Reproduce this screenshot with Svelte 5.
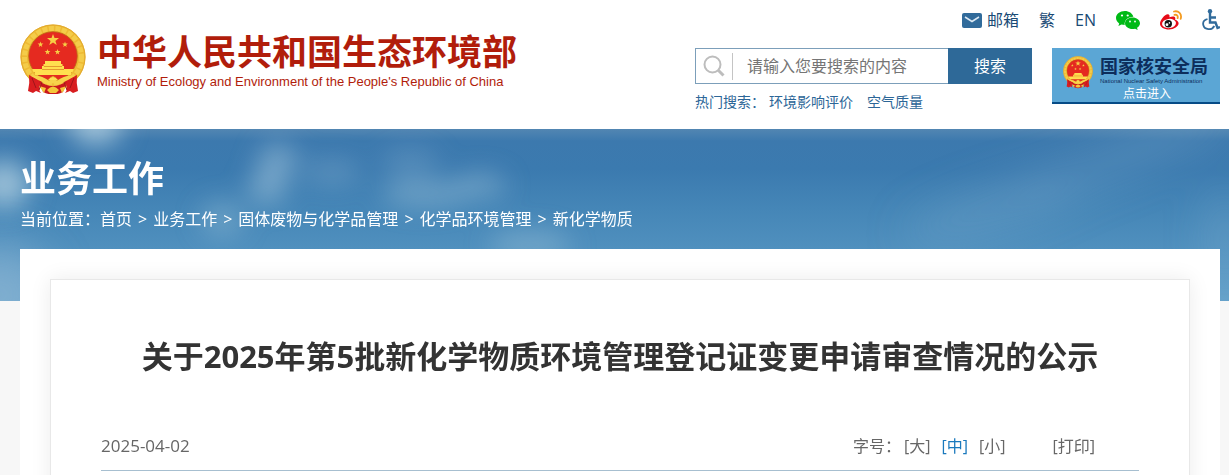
<script>
  // Article page: site header, sky banner with breadcrumb, notice card with font size switch.
  let keyword = ''
  let size = '中'

  const hotWords = ['环境影响评价', '空气质量']
  const crumbs = ['首页', '业务工作', '固体废物与化学品管理', '化学品环境管理', '新化学物质']
  const sizes = ['大', '中', '小']
  // four small stars around the big one: x, y
  const stars = [[20.5, 20.5], [27.5, 28], [37.5, 28], [45, 20.5]]
  const star = 'M0-6 1.5-2 6-1.9 2.4.9 3.7 5 0 2.6-3.7 5-2.4.9-6-1.9-1.5-2Z'
</script>

{#snippet emblem()}
  <svg class="emblem" viewBox="0 0 66 70" aria-hidden="true">
    <circle cx="33" cy="33" r="32.5" fill="#eeb934" />
    <circle cx="33" cy="33" r="28.5" fill="none" stroke="#f4cc49" stroke-width="5" stroke-dasharray="5 1.5" />
    <circle cx="33" cy="33" r="32" fill="none" stroke="#e2aa30" stroke-width="1" />
    <circle cx="33" cy="32" r="24.3" fill="#e52a20" stroke="#bd6517" stroke-width="0.8" />
    <path d={star} fill="#f7cf45" transform="translate(33 16)" />
    {#each stars as [x, y]}
      <path d={star} fill="#f7cf45" transform="translate({x} {y}) scale(.48)" />
    {/each}
    <path d="M25 37h16v3h1.500v2H23.500v-2H25ZM22 42h22v4H22ZM12 45h42l-1.500 3H13.500ZM15 48h36v3H15Z" fill="#ffdf4f" />
    <path d="M24 42.500h18M22 45.500h22" stroke="#d87d20" stroke-width="0.7" />
    <path d="M9 51 22 57Q17 65 21 69L16 67 13 69 8 67Q10 59 9 51ZM57 51 44 57Q49 65 45 69L50 67 53 69 58 67Q56 59 57 51Z" fill="#d81d20" />
    <path d="M19 57Q33 67 47 57L43 68Q33 73 23 68Z" fill="#c9181d" />
    <path d="M11 52Q22 51 29 57L33 52 37 57Q44 51 55 52L48 56Q42 59 37 61L33 59 29 61Q23 58 18 56Z" fill="#f7d34b" />
    <path d="M19 62 26 64 24 69ZM47 62 40 64 42 69ZM27 66Q33 59 39 66L36 69H30Z" fill="#f4c73b" />
    <path d="m12 54 4 10M54 54l-4 10M22 58l-3 8M44 58l3 8" stroke="#9f151a" stroke-width="1" />
    <path d="M28 56Q33 49 38 56" fill="#ffdd55" stroke="#d79522" stroke-width="0.7" />
  </svg>
{/snippet}

<header class="wrap header">
  <a class="brand" href="#home">
    {@render emblem()}
    <span class="names">
      <strong>中华人民共和国生态环境部</strong>
      <span>Ministry of Ecology and Environment of the People's Republic of China</span>
    </span>
  </a>

  <div class="tools">
    <nav class="quick" aria-label="快捷入口">
      <a class="mail" href="#mail">
        <svg width="20" height="15" viewBox="0 0 20 15" aria-hidden="true">
          <rect width="20" height="15" rx="2" fill="#316b9b" />
          <path d="m3 4 7 4.500L17 4" fill="none" stroke="#dce9f4" stroke-width="1.500" />
        </svg>邮箱</a>
      <a href="#traditional">繁</a>
      <a href="#english">EN</a>
      <a href="#wechat" aria-label="微信">
        <svg width="24" height="20" viewBox="0 0 24 20" fill="#00ba16">
          <path d="M8.800 1C4 1 0 4.100 0 8c0 2.200 1.300 4.100 3.200 5.400L2.400 16l3.100-1.500c1 .3 2 .5 3.200.5C8 10.500 11.600 7 17.400 6.700 16.500 3.400 13 1 8.800 1Z" />
          <path d="M16.500 7.500c-4.200 0-7.500 2.600-7.500 5.800s3.300 5.800 7.500 5.800c.9 0 1.800-.1 2.600-.4l2.600 1.300-.7-2.200c1.800-1 3-2.700 3-4.500 0-3.200-3.400-5.800-7.500-5.800Z" />
          <g fill="#fff"><circle cx="6" cy="5.500" r="1.100" /><circle cx="11.700" cy="5.500" r="1.100" /><circle cx="14" cy="11.500" r="0.900" /><circle cx="19" cy="11.500" r="0.900" /></g>
        </svg>
      </a>
      <a href="#weibo" aria-label="微博">
        <svg width="22" height="20" viewBox="0 0 22 20">
          <path d="M8.600 4.500c1.200.5 1.100 1.900.8 2.800 2.500-1.100 5.100-1.200 5.700.1.400.8.200 1.700 0 2.300 2.200.7 3.500 1.800 3.500 3.600 0 3.200-4.600 6.200-9.500 6.200C4 19.500 0 17.100 0 13.700c0-3.700 5.600-10.500 8.600-9.200Z" fill="#e60b18" />
          <ellipse cx="9" cy="13.500" rx="7" ry="4.600" fill="#fff" transform="rotate(-7 9 13.500)" />
          <circle cx="8.300" cy="13.700" r="3.700" fill="#111" />
          <circle cx="7" cy="14.700" r="1.400" fill="#fff" /><circle cx="9.400" cy="12.900" r="0.800" fill="#fff" />
          <path d="M14 1.500c4.400-1.200 8.200 2.500 6.700 7.300M14.500 4.900c2.200-.6 3.800 1.100 3.100 3.200" fill="none" stroke="#f49b20" stroke-width="1.800" stroke-linecap="round" />
        </svg>
      </a>
      <a href="#accessible" aria-label="无障碍">
        <svg width="18" height="22" viewBox="0 0 18 22" fill="none" stroke="#316b9b" stroke-width="2">
          <circle cx="8" cy="2.300" r="2.200" fill="#316b9b" stroke="none" />
          <path d="M8 4v9.500h5.500l2 5.500 2.500-1M8 8.500h6" stroke-width="2.400" />
          <path d="M5.500 10C2 11 .7 13.500 1.300 16c1.200 5 8.700 5.700 11 1" stroke-width="1.800" />
        </svg>
      </a>
    </nav>

    <div class="lower">
      <div>
        <form class="search" on:submit|preventDefault>
          <label class="field">
            <svg width="22" height="22" viewBox="0 0 22 22" fill="none" stroke="#bdbdbd" aria-hidden="true">
              <circle cx="9.500" cy="9.500" r="8" stroke-width="2" />
              <path d="m15 15 5.500 5.500" stroke-width="3" />
            </svg>
            <input type="text" aria-label="搜索" placeholder="请输入您要搜索的内容" bind:value={keyword} />
          </label>
          <button>搜索</button>
        </form>
        <p class="hot">
          <span>热门搜索：</span>
          {#each hotWords as word}<a href="#hot">{word}</a>{/each}
        </p>
      </div>
      <a class="nnsa" href="#nnsa">
        {@render emblem()}
        <span class="nnsa-text">
          <strong>国家核安全局</strong>
          <small>National Nuclear Safety Administration</small>
        </span>
        <span class="enter">点击进入</span>
      </a>
    </div>
  </div>
</header>

<main>
  <!-- sky banner, runs behind the top of the white content block -->
  <svg class="sky" viewBox="0 0 1229 172" preserveAspectRatio="none" aria-hidden="true">
    <defs>
      <filter id="soft" x="-50%" y="-80%" width="200%" height="260%"><feGaussianBlur stdDeviation="13" /></filter>
      <filter id="wide" x="-50%" y="-100%" width="200%" height="300%"><feGaussianBlur stdDeviation="22" /></filter>
    </defs>
    <g fill="#a9cadd" filter="url(#soft)">
      <ellipse cx="96" cy="-6" rx="26" ry="22" opacity="0.9" />
      <ellipse cx="4" cy="55" rx="26" ry="24" opacity="0.85" />
      <ellipse cx="278" cy="32" rx="19" ry="18" opacity="0.5" />
      <ellipse cx="267" cy="58" rx="18" ry="18" opacity="0.5" />
      <ellipse cx="332" cy="43" rx="30" ry="12" opacity="0.3" />
      <ellipse cx="410" cy="34" rx="30" ry="16" opacity="0.22" />
      <ellipse cx="425" cy="65" rx="44" ry="13" opacity="0.42" />
      <ellipse cx="480" cy="56" rx="26" ry="12" opacity="0.42" />
      <ellipse cx="222" cy="90" rx="22" ry="18" opacity="0.35" />
      <ellipse cx="530" cy="116" rx="42" ry="14" opacity="0.4" />
    </g>
    <g fill="#8ab4d2" filter="url(#wide)">
      <ellipse cx="0" cy="165" rx="50" ry="50" opacity="0.7" />
      <ellipse cx="1130" cy="26" rx="120" ry="14" opacity="0.35" transform="rotate(-22 1130 26)" />
      <ellipse cx="990" cy="80" rx="90" ry="18" opacity="0.3" transform="rotate(-18 990 80)" />
      <ellipse cx="1225" cy="110" rx="14" ry="50" opacity="0.4" />
    </g>
  </svg>
  <div class="wrap front">
    <div class="channel">
      <h2>业务工作</h2>
      <nav class="crumbs" aria-label="当前位置">
        <span>当前位置：</span>
        {#each crumbs as crumb, i}
          {#if i > 0}<span>&gt;</span>{/if}
          <a href="#channel">{crumb}</a>
        {/each}
      </nav>
    </div>
    <div class="content">
      <article>
        <h1>关于2025年第5批新化学物质环境管理登记证变更申请审查情况的公示</h1>
        <div class="meta">
          <time datetime="2025-04-02">2025-04-02</time>
          <div class="actions">
            <span>字号：</span>
            {#each sizes as s}
              <button class:active={size === s} on:click={() => (size = s)}>[{s}]</button>
            {/each}
            <button class="print" on:click={() => window.print()}>[打印]</button>
          </div>
        </div>
      </article>
    </div>
  </div>
</main>

<style>
  :global(body) { margin: 0; background: #f7f7f7; font: 16px/24px "Open Sans", "Noto Sans CJK SC", sans-serif; color: #666; overflow-x: hidden; }
  a { color: inherit; text-decoration: none; }
  button { border: 0; padding: 0; background: none; font: inherit; color: inherit; cursor: pointer; }
  h1, h2, p { margin: 0; }
  svg { display: block; flex: none; }
  .wrap { padding: 0 9px 0 20px; }

  .header { display: flex; justify-content: space-between; height: 129px; background: #fff; }
  .brand { display: flex; align-items: flex-start; gap: 10px; padding-top: 24px; color: #b11d0b; }
  .emblem { width: 66px; height: 70px; }
  .names { display: flex; flex-direction: column; padding: 2px 0 0 1px; white-space: nowrap; }
  .names strong { font: 700 35px/48px "Noto Sans CJK SC", sans-serif; }
  .names span { font: 13px/16px "Liberation Sans", sans-serif; }

  .quick { display: flex; justify-content: flex-end; align-items: center; gap: 20px; height: 40px; color: #1a4a75; }
  .mail { display: flex; align-items: center; gap: 5px; }
  .lower { display: flex; gap: 20px; padding-top: 8px; }
  .search { display: flex; height: 36px; }
  .field { display: flex; align-items: center; box-sizing: border-box; width: 253px; padding-left: 7px; border: 1px solid #7c9fba; border-right: 0; }
  .field input { flex: 1; min-width: 0; height: 27px; margin-left: 7px; padding: 0 0 0 14px; border: 0; border-left: 1px solid #c4c4c4; outline: 0; background: none; font: inherit; color: #666; }
  .field input::placeholder { color: #757575; }
  .search button { width: 84px; background: #2e6998; color: #fff; }
  .hot { display: flex; gap: 14px; padding-top: 6px; font-size: 14px; color: #2c6697; }
  .hot span { margin-right: -10px; }
  .nnsa { display: grid; grid-template-columns: 28px auto; grid-template-rows: 34px 16px; column-gap: 9px; box-sizing: border-box; width: 168px; height: 56px; padding: 4px 0 0 11px; border-bottom: 2px solid #064b86; background: #5ba6d5; }
  .nnsa .emblem { width: 30px; height: 36px; margin-top: 2px; }
  .nnsa-text { display: flex; flex-direction: column; color: #0d2e5c; white-space: nowrap; }
  .nnsa-text strong { font: 700 18px/26px "Noto Sans CJK SC", sans-serif; }
  .nnsa-text small { font: 6px/6px "Liberation Sans", sans-serif; }
  .enter { grid-column: 1 / -1; padding-left: 60px; font-size: 12px; line-height: 16px; color: #fff; }

  main { position: relative; }
  .sky { position: absolute; top: 0; left: 0; width: 100%; height: 172px; overflow: hidden; background: linear-gradient(#5286b2 0, #3c79ae 12px, #3b7aaf 40px, #4586b7 80px, #5090be 120px, #65a2ca 172px); }
  .front { position: relative; }
  .channel { height: 120px; box-sizing: border-box; padding-top: 28px; color: #fff; }
  .channel h2 { font-size: 36px; line-height: 44px; }
  .crumbs { display: flex; gap: 6px; padding-top: 6px; white-space: nowrap; }
  .crumbs span:first-child { margin-right: -6px; }

  .content { padding: 30px 30px 0; background: #fff; }
  article { padding: 52px 50px 40px; border: 1px solid #e8e8e8; box-shadow: 0 0 20px #00000014; background: #fff; }
  h1 { font-size: 31px; line-height: 48px; text-align: center; color: #333; }
  .meta { display: flex; justify-content: space-between; margin-top: 54px; padding-bottom: 12px; border-bottom: 1px solid #a7bfd0; }
  .meta time { font-size: 17px; }
  .actions { display: flex; gap: 11px; padding-right: 44px; }
  .actions span { margin-right: -8px; }
  .actions .active { color: #1a79bd; }
  .actions .print { margin-left: 36px; }
</style>
